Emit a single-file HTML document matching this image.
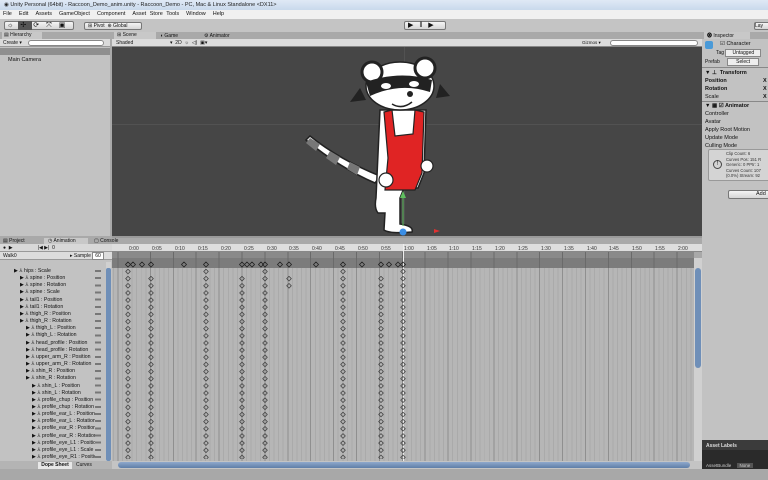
<!DOCTYPE html>
<html><head><meta charset="utf-8"><style>
*{margin:0;padding:0;box-sizing:border-box}
body{width:768px;height:480px;overflow:hidden;background:#a9a9a9;font-family:"Liberation Sans",sans-serif;font-size:5.5px;color:#111;position:relative}
.a{position:absolute}
.t{white-space:nowrap}
.btn{position:absolute;background:linear-gradient(#f4f4f4,#d6d6d6);border:1px solid #777;border-radius:2px}
</style></head><body>
<div class="a" style="left:0;top:0;width:768px;height:10px;background:linear-gradient(#dfe9f5,#c9d9ec)"></div>
<div class="a t" style="left:4px;top:2px;font-size:5.5px;color:#222">◉ Unity Personal (64bit) - Raccoon_Demo_anim.unity - Raccoon_Demo - PC, Mac &amp; Linux Standalone &lt;DX11&gt;</div>
<div class="a" style="left:0;top:10px;width:768px;height:9px;background:#f0f0f0"></div>
<div class="a t" style="left:3px;top:11px;font-size:5.5px;word-spacing:2px">File &nbsp;Edit &nbsp;Assets &nbsp;GameObject &nbsp;Component &nbsp;Asset Store Tools &nbsp;Window &nbsp;Help</div>
<div class="a" style="left:0;top:19px;width:768px;height:13px;background:#c4c4c4"></div>
<div class="btn" style="left:4px;top:21px;width:70px;height:9px"></div>
<div class="a" style="left:18px;top:21px;width:14px;height:9px;background:#555"></div>
<div class="a t" style="left:7px;top:21px;font-size:7px;letter-spacing:7px">☼✢⟳⤧▣</div>
<div class="btn t" style="left:84px;top:22px;width:58px;height:8px;font-size:5px;padding-left:3px">⊞ Pivot &nbsp;⊕ Global</div>
<div class="btn" style="left:404px;top:21px;width:42px;height:9px"></div>
<div class="a t" style="left:408px;top:21px;font-size:7px;letter-spacing:6px">▶‖▶</div>
<div class="btn t" style="left:754px;top:22px;width:16px;height:8px;font-size:5px">Lay</div>
<div class="a" style="left:0;top:32px;width:110px;height:204px;background:#c2c2c2"></div>
<div class="a" style="left:0;top:32px;width:110px;height:7px;background:#a9a9a9"></div>
<div class="a t" style="left:2px;top:32px;width:40px;height:7px;background:#c8c8c8;padding-left:2px;font-size:5px">▤ Hierarchy</div>
<div class="a" style="left:0;top:39px;width:110px;height:8px;background:#dadada;border-bottom:1px solid #999"></div>
<div class="a t" style="left:3px;top:40px;font-size:5px">Create ▾</div>
<div class="a" style="left:28px;top:40px;width:76px;height:6px;background:#fff;border:1px solid #888;border-radius:3px"></div>
<div class="a" style="left:0;top:48px;width:110px;height:7px;background:#8f8f8f"></div>
<div class="a t" style="left:8px;top:57px;font-size:5.5px">Main Camera</div>
<div class="a" style="left:111px;top:32px;width:591px;height:7px;background:#a9a9a9"></div>
<div class="a t" style="left:114px;top:32px;width:42px;height:7px;background:#c8c8c8;padding-left:3px;font-size:5px">⊞ Scene</div>
<div class="a t" style="left:160px;top:33px;font-size:5px">◖ Game</div>
<div class="a t" style="left:204px;top:33px;font-size:5px">⚙ Animator</div>
<div class="a" style="left:112px;top:39px;width:590px;height:8px;background:#dcdcdc;border-bottom:1px solid #888"></div>
<div class="a t" style="left:116px;top:40px;font-size:5px">Shaded</div>
<div class="a t" style="left:170px;top:40px;font-size:5px">▾ &nbsp;2D &nbsp;☼ &nbsp;◁) &nbsp;▣▾</div>
<div class="a t" style="left:582px;top:40px;font-size:4.5px">Gizmos ▾</div>
<div class="a" style="left:610px;top:40px;width:88px;height:6px;background:#fff;border:1px solid #888;border-radius:3px"></div>
<div class="a" style="left:112px;top:47px;width:590px;height:189px;background:#464646"></div>
<div class="a" style="left:112px;top:124px;width:590px;height:1px;background:#525252"></div>
<div class="a" style="left:404px;top:47px;width:1px;height:189px;background:#525252"></div>
<div class="a" style="left:112px;top:236px;width:590px;height:2px;background:#9a9a9a"></div>
<svg class="a" style="left:300px;top:48px" width="160" height="190" viewBox="0 0 160 190">
 <path d="M6 92 Q40 120 75 135 L80 128 Q40 112 10 88 Z" fill="#fff" stroke="#222" stroke-width="1.5"/>
 <path d="M10 90 L20 96 L16 103 L6 95Z M30 103 L40 109 L36 117 L26 110Z M50 114 L60 119 L57 127 L47 121Z" fill="#777"/>
 <path d="M80 62 L76 150 Q74 160 78 165 L85 165 L84 182 Q90 186 112 184 Q114 178 100 176 L100 150 L104 140 L118 140 L124 125 L126 62 Z" fill="#fff" stroke="#222" stroke-width="1.5"/>
 <path d="M84 64 L88 110 L85 142 L115 142 L122 125 L124 64 L115 62 L113 86 L95 88 L92 62 Z" fill="#e02424" stroke="#222" stroke-width="1.2"/>
 <circle cx="86" cy="132" r="7" fill="#fff" stroke="#222" stroke-width="1.2"/>
 <circle cx="127" cy="118" r="6" fill="#fff" stroke="#222" stroke-width="1.2"/>
 <ellipse cx="100" cy="38" rx="34" ry="24" fill="#fff" stroke="#222" stroke-width="1.5"/>
 <circle cx="72" cy="24" r="10" fill="#fff" stroke="#222" stroke-width="3"/>
 <circle cx="125" cy="20" r="10" fill="#fff" stroke="#222" stroke-width="3"/>
 <path d="M66 34 Q100 22 132 32 L130 44 Q100 34 70 48 Z" fill="#222"/>
 <ellipse cx="86" cy="38" rx="5" ry="3" fill="#fff"/><ellipse cx="114" cy="36" rx="5" ry="3" fill="#fff"/>
 <circle cx="110" cy="46" r="3" fill="#222"/>
 <path d="M92 56 Q102 62 112 54" fill="none" stroke="#222" stroke-width="1.5"/>
 <path d="M60 40 L50 54 L66 52Z M140 36 L150 48 L136 50Z" fill="#222"/>
 <path d="M103 150 L103 178" stroke="#5fbf5f" stroke-width="1"/>
 <path d="M100 150 L103 143 L106 150Z" fill="#5fbf5f"/>
 <circle cx="103" cy="184" r="3.5" fill="#3a8ee6"/>
 <path d="M134 181 L140 183 L134 185Z" fill="#e03030"/>
</svg>
<div class="a" style="left:702px;top:32px;width:66px;height:408px;background:#c2c2c2"></div>
<div class="a" style="left:702px;top:32px;width:66px;height:7px;background:#a9a9a9"></div>
<div class="a t" style="left:704px;top:32px;width:46px;height:7px;background:#c8c8c8;padding-left:3px;font-size:5px">⓿ Inspector</div>
<div class="a" style="left:705px;top:41px;width:8px;height:8px;background:#4a9ad8;border-radius:2px"></div>
<div class="a t" style="left:720px;top:41px;font-size:5.5px">☑ Character</div>
<div class="a t" style="left:716px;top:50px;font-size:5px">Tag <span style="background:#eee;border:1px solid #888;padding:0 6px">Untagged</span></div>
<div class="a t" style="left:705px;top:59px;font-size:5px">Prefab <span style="background:#eee;border:1px solid #888;padding:0 8px;margin-left:6px">Select</span></div>
<div class="a" style="left:702px;top:67px;width:66px;height:1px;background:#888"></div>
<div class="a t" style="left:705px;top:69px;font-size:5.5px;font-weight:bold;line-height:8px">▼ ⊥ &nbsp;Transform<br>Position<br>Rotation<br><span style="font-weight:normal">Scale</span></div>
<div class="a t" style="left:763px;top:77px;font-size:5.5px;font-weight:bold;line-height:8px">X<br>X<br>X</div>
<div class="a" style="left:702px;top:101px;width:66px;height:1px;background:#888"></div>
<div class="a t" style="left:705px;top:102px;font-size:5.5px;line-height:8px"><b>▼ ▦ ☑ Animator</b><br>Controller<br>Avatar<br>Apply Root Motion<br>Update Mode<br>Culling Mode</div>
<div class="a" style="left:708px;top:149px;width:62px;height:32px;background:#d4d4d4;border:1px solid #999;border-radius:2px"></div>
<div class="a" style="left:713px;top:160px;width:9px;height:9px;border:1px solid #444;border-radius:50%;font-size:6px;text-align:center;line-height:7px">!</div>
<div class="a t" style="left:726px;top:151px;font-size:4.2px;line-height:5.5px;color:#333">Clip Count: 6<br>Curves Pos: 151 R<br>Generic: 0 PPtr: 1<br>Curves Count: 107<br>(0.0%) Stream: 92</div>
<div class="btn" style="left:728px;top:190px;width:44px;height:9px;font-size:5.5px;padding-left:27px">Add</div>
<div class="a" style="left:702px;top:440px;width:66px;height:30px;background:#3b3b3b"></div>
<div class="a t" style="left:706px;top:443px;font-size:5px;color:#ddd;font-weight:bold">Asset Labels</div>
<div class="a" style="left:702px;top:450px;width:66px;height:20px;background:#2a2a2a"></div>
<div class="a t" style="left:706px;top:463px;font-size:4.5px;color:#ccc">AssetBundle <span style="background:#555;padding:0 3px;margin-left:4px">None</span></div>
<div class="a" style="left:0;top:238px;width:702px;height:6px;background:#a9a9a9"></div>
<div class="a t" style="left:3px;top:238px;font-size:5px">▤ Project</div>
<div class="a t" style="left:44px;top:238px;width:44px;height:6px;background:#c8c8c8;padding-left:4px;font-size:5px">◷ Animation</div>
<div class="a t" style="left:94px;top:238px;font-size:5px">▢ Console</div>
<div class="a" style="left:0;top:244px;width:112px;height:225px;background:#c2c2c2"></div>
<div class="a" style="left:0;top:244px;width:112px;height:8px;background:#d8d8d8;border-bottom:1px solid #999"></div>
<div class="a t" style="left:3px;top:245px;font-size:5px">● &nbsp;▶ &nbsp;&nbsp;&nbsp;&nbsp;&nbsp;&nbsp;&nbsp;&nbsp;&nbsp;&nbsp;&nbsp;&nbsp;&nbsp;&nbsp;&nbsp;&nbsp;&nbsp;|◀ ▶| &nbsp;0</div>
<div class="a" style="left:0;top:252px;width:112px;height:8px;background:#dcdcdc;border-bottom:1px solid #999"></div>
<div class="a t" style="left:3px;top:253px;font-size:5px">Walk0</div>
<div class="a t" style="left:70px;top:253px;font-size:5px">▸ Sample <span style="background:#fff;border:1px solid #888;padding:0 2px">60</span></div>
<div class="a" style="left:106px;top:262px;width:5px;height:200px;background:#d0d0d0"></div>
<div class="a" style="left:106px;top:268px;width:5px;height:193px;background:#6f8fb8;border-radius:2px"></div>
<div class="a t" style="left:0;top:268px;font-size:5.2px;line-height:7.15px;color:#111">
<div style="padding-left:14px">▶ ⅄ hips : Scale</div>
<div style="padding-left:20px">▶ ⅄ spine : Position</div>
<div style="padding-left:20px">▶ ⅄ spine : Rotation</div>
<div style="padding-left:20px">▶ ⅄ spine : Scale</div>
<div style="padding-left:20px">▶ ⅄ tail1 : Position</div>
<div style="padding-left:20px">▶ ⅄ tail1 : Rotation</div>
<div style="padding-left:20px">▶ ⅄ thigh_R : Position</div>
<div style="padding-left:20px">▶ ⅄ thigh_R : Rotation</div>
<div style="padding-left:26px">▶ ⅄ thigh_L : Position</div>
<div style="padding-left:26px">▶ ⅄ thigh_L : Rotation</div>
<div style="padding-left:26px">▶ ⅄ head_profile : Position</div>
<div style="padding-left:26px">▶ ⅄ head_profile : Rotation</div>
<div style="padding-left:26px">▶ ⅄ upper_arm_R : Position</div>
<div style="padding-left:26px">▶ ⅄ upper_arm_R : Rotation</div>
<div style="padding-left:26px">▶ ⅄ shin_R : Position</div>
<div style="padding-left:26px">▶ ⅄ shin_R : Rotation</div>
<div style="padding-left:32px">▶ ⅄ shin_L : Position</div>
<div style="padding-left:32px">▶ ⅄ shin_L : Rotation</div>
<div style="padding-left:32px">▶ ⅄ profile_chup : Position</div>
<div style="padding-left:32px">▶ ⅄ profile_chup : Rotation</div>
<div style="padding-left:32px">▶ ⅄ profile_ear_L : Position</div>
<div style="padding-left:32px">▶ ⅄ profile_ear_L : Rotation</div>
<div style="padding-left:32px">▶ ⅄ profile_ear_R : Position</div>
<div style="padding-left:32px">▶ ⅄ profile_ear_R : Rotation</div>
<div style="padding-left:32px">▶ ⅄ profile_eye_L1 : Position</div>
<div style="padding-left:32px">▶ ⅄ profile_eye_L1 : Scale</div>
<div style="padding-left:32px">▶ ⅄ profile_eye_R1 : Position</div>
</div>
<div class="a" style="left:95px;top:268px;width:6px;height:192px;background:repeating-linear-gradient(#c2c2c2 0 2px,#777 2px 4px,#c2c2c2 4px 7.15px)"></div>
<div class="a" style="left:0;top:461px;width:112px;height:8px;background:#b4b4b4"></div>
<div class="a t" style="left:38px;top:462px;width:34px;height:7px;background:#e8e8e8;font-size:5px;text-align:center;font-weight:bold">Dope Sheet</div>
<div class="a t" style="left:76px;top:462px;font-size:5px">Curves</div>
<div class="a" style="left:112px;top:244px;width:590px;height:8px;background:#dedede;border-bottom:1px solid #888"></div>
<div class="a" style="left:112px;top:252px;width:582px;height:6px;background:#8a8a8a"></div>
<div class="a" style="left:112px;top:258px;width:582px;height:10px;background:#7c7c7c"></div>
<div class="a" style="left:112px;top:268px;width:582px;height:193px;background-color:#b6b6b6;background-image:repeating-linear-gradient(90deg,transparent 0 21.9px,#8f8f8f 21.9px 22.9px),repeating-linear-gradient(90deg,transparent 0 3.6px,#aaa 3.6px 4.58px);background-position:16px 0,16px 0"></div>
<div class="a" style="left:112px;top:252px;width:582px;height:16px;background-image:repeating-linear-gradient(90deg,transparent 0 21.9px,#6a6a6a 21.9px 22.9px);background-position:16px 0"></div>
<div class="a" style="left:403px;top:244px;width:1px;height:217px;background:#eee"></div>
<div class="a" style="left:694px;top:258px;width:8px;height:203px;background:#d0d0d0"></div>
<div class="a" style="left:695px;top:268px;width:6px;height:100px;background:#6f8fb8;border-radius:3px"></div>
<div class="a" style="left:112px;top:461px;width:590px;height:8px;background:#c4c4c4"></div>
<div class="a" style="left:118px;top:462px;width:572px;height:6px;background:linear-gradient(#8fa8cc,#5f7ea8);border-radius:3px"></div>
<div class="a" style="left:0;top:469px;width:768px;height:11px;background:#a8a8a8"></div>
<svg class="a" style="left:112px;top:244px" width="590" height="217">
<defs>
<pattern id="p" x="0" y="24" width="8" height="7.15" patternUnits="userSpaceOnUse"><path d="M4 1.2 L6.3 3.5 L4 5.8 L1.7 3.5Z" fill="none" stroke="#333" stroke-width="0.7"/></pattern>
</defs>
<g font-size="5" fill="#333" font-family="Liberation Sans">
<text x="17" y="6">0:00</text><text x="40" y="6">0:05</text><text x="63" y="6">0:10</text><text x="86" y="6">0:15</text><text x="109" y="6">0:20</text><text x="132" y="6">0:25</text><text x="155" y="6">0:30</text><text x="177" y="6">0:35</text><text x="200" y="6">0:40</text><text x="223" y="6">0:45</text><text x="246" y="6">0:50</text><text x="269" y="6">0:55</text><text x="292" y="6">1:00</text><text x="315" y="6">1:05</text><text x="337" y="6">1:10</text><text x="360" y="6">1:15</text><text x="383" y="6">1:20</text><text x="406" y="6">1:25</text><text x="429" y="6">1:30</text><text x="452" y="6">1:35</text><text x="475" y="6">1:40</text><text x="497" y="6">1:45</text><text x="520" y="6">1:50</text><text x="543" y="6">1:55</text><text x="566" y="6">2:00</text>
</g>
<g fill="none" stroke="#222" stroke-width="0.8">
<path d="M16 18l2.5 2.5-2.5 2.5-2.5-2.5z M21 18l2.5 2.5-2.5 2.5-2.5-2.5z M30 18l2.5 2.5-2.5 2.5-2.5-2.5z M39 18l2.5 2.5-2.5 2.5-2.5-2.5z M72 18l2.5 2.5-2.5 2.5-2.5-2.5z M94 18l2.5 2.5-2.5 2.5-2.5-2.5z M130 18l2.5 2.5-2.5 2.5-2.5-2.5z M135 18l2.5 2.5-2.5 2.5-2.5-2.5z M140 18l2.5 2.5-2.5 2.5-2.5-2.5z M149 18l2.5 2.5-2.5 2.5-2.5-2.5z M153 18l2.5 2.5-2.5 2.5-2.5-2.5z M168 18l2.5 2.5-2.5 2.5-2.5-2.5z M177 18l2.5 2.5-2.5 2.5-2.5-2.5z M204 18l2.5 2.5-2.5 2.5-2.5-2.5z M231 18l2.5 2.5-2.5 2.5-2.5-2.5z M250 18l2.5 2.5-2.5 2.5-2.5-2.5z M269 18l2.5 2.5-2.5 2.5-2.5-2.5z M277 18l2.5 2.5-2.5 2.5-2.5-2.5z M286 18l2.5 2.5-2.5 2.5-2.5-2.5z M291 18l2.5 2.5-2.5 2.5-2.5-2.5z"/>
</g>
<g transform="translate(12,0)"><rect x="0" y="25" width="8" height="190" fill="url(#p)"/></g>
<g transform="translate(35,0)"><rect x="0" y="32" width="8" height="183" fill="url(#p)"/></g>
<g transform="translate(90,0)"><rect x="0" y="25" width="8" height="190" fill="url(#p)"/></g>
<g transform="translate(126,0)"><rect x="0" y="32" width="8" height="183" fill="url(#p)"/></g>
<g transform="translate(149,0)"><rect x="0" y="25" width="8" height="190" fill="url(#p)"/></g>
<g transform="translate(173,0)"><rect x="0" y="32" width="8" height="14" fill="url(#p)"/></g>
<g transform="translate(227,0)"><rect x="0" y="25" width="8" height="190" fill="url(#p)"/></g>
<g transform="translate(265,0)"><rect x="0" y="32" width="8" height="183" fill="url(#p)"/></g>
<g transform="translate(287,0)"><rect x="0" y="25" width="8" height="190" fill="url(#p)"/></g>
</svg>
</body></html>
